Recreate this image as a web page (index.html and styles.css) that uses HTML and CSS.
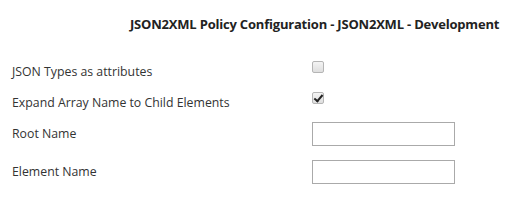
FILE: index.html
```html
<!DOCTYPE html>
<html lang="en">
<head>
  <meta charset="UTF-8" />
  <title>JSON2XML Policy Configuration</title>
  <link rel="stylesheet" href="styles.css">
</head>
<body>
  <h1 class="title">JSON2XML Policy Configuration - JSON2XML - Development</h1>

  <!-- Policy settings -->
  <form class="policy-form">
    <div class="row check-row">
      <label for="jsonTypes">JSON Types as attributes</label>
      <input type="checkbox" id="jsonTypes">
    </div>
    <div class="row check-row">
      <label for="expandArray">Expand Array Name to Child Elements</label>
      <input type="checkbox" id="expandArray" checked>
    </div>
    <div class="row text-row">
      <label for="rootName">Root Name</label>
      <input type="text" id="rootName">
    </div>
    <div class="row text-row">
      <label for="elementName">Element Name</label>
      <input type="text" id="elementName">
    </div>
  </form>
</body>
</html>
```

FILE: styles.css
```css
body {
  margin: 0;
  font-family: 'Open Sans', 'Liberation Sans', sans-serif;
  font-size: 12.3px;
  color: #333;
  background-color: #fff;
}

.title {
  margin: 0;
  padding: 14px 0 0 130px;
  font-size: 13px;
  letter-spacing: -0.2px;
  line-height: 20px;
  font-weight: bold;
  white-space: nowrap;
  color: #222;
}

/* Form rows */
.policy-form {
  padding: 0 12px;
  margin-top: 26px;
}

.row {
  display: grid;
  grid-template-columns: 300px 143px;
  align-items: center;
  height: 24px;
}

.row label {
  line-height: 18px;
}

.check-row {
  margin-bottom: 7px;
}

.text-row {
  margin-top: 2px;
  margin-bottom: 14px;
}

/* Checkboxes */
.check-row input {
  appearance: none;
  -webkit-appearance: none;
  position: relative;
  width: 12px;
  height: 12px;
  margin: 0 0 10px 0;
  border: 1px solid #b5b5b5;
  border-radius: 2px;
  background: linear-gradient(#f4f4f4, #dedede);
}

.check-row input:checked::after {
  content: '';
  position: absolute;
  left: 3px;
  top: 0px;
  width: 3px;
  height: 7px;
  border: solid #222;
  border-width: 0 2px 2px 0;
  transform: rotate(40deg);
}

/* Text inputs */
.text-row input {
  box-sizing: border-box;
  width: 143px;
  height: 24px;
  margin: 0;
  border: 1px solid #aaa;
  padding: 2px 4px;
  font-family: inherit;
  font-size: 13px;
}
```
